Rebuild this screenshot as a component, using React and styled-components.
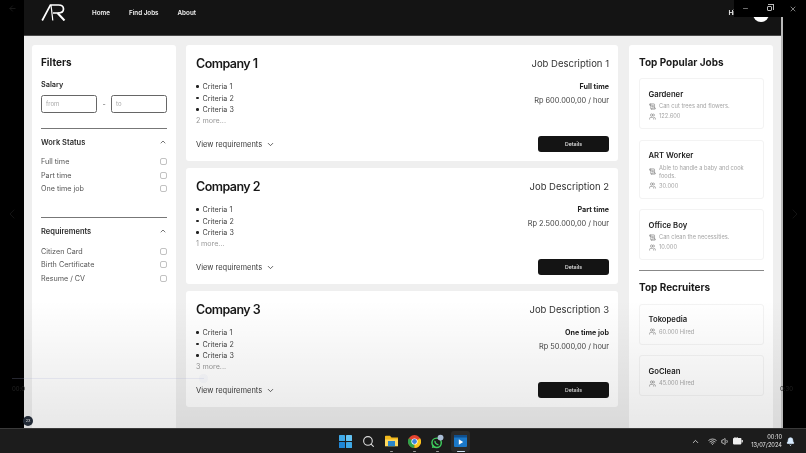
import styled, { createGlobalStyle } from "styled-components";
import {
  ChevronDown,
  ChevronUp,
  ChevronLeft,
  ChevronRight,
  ArrowLeft,
  Minus,
  X,
  Search,
  Users,
  ScrollText,
  Wifi,
  Volume1,
  Bell,
} from "lucide-react";

const GlobalStyle = createGlobalStyle`
  html, body {
    margin: 0;
    padding: 0;
    background: #000;
    overflow: hidden;
  }
  * {
    box-sizing: border-box;
  }
  body {
    font-family: Inter, "Liberation Sans", sans-serif;
  }
`;

// the reference is a soft video frame, so everything gets a touch of blur
const Screen = styled.div`
  position: relative;
  width: 806px;
  height: 453px;
  display: flex;
  flex-direction: column;
  overflow: hidden;
  background: #000;
  filter: blur(0.3px);
`;

const Stage = styled.div`
  height: 428px;
  display: grid;
  grid-template-columns: 24px 759px 23px;
`;

const Gutter = styled.div`
  display: flex;
  align-items: center;
  justify-content: center;
  color: #1d1d1d;
`;

const BackArrow = styled.div`
  position: absolute;
  left: 8px;
  top: 4px;
  color: #222;
  display: flex;
`;

const Browser = styled.div`
  position: relative;
  display: flex;
  flex-direction: column;
  height: 428px;
  overflow: hidden;
  background: #efefef;
  border-right: 2px solid #b9b9b9;
`;

const Nav = styled.nav`
  height: 36px;
  flex: none;
  display: flex;
  align-items: center;
  padding: 0 12px 10px 17px;
  background: #141414;
  border-bottom: 1px solid #4a4a4a;
`;

const Logo = styled.svg`
  width: 25px;
  height: 17px;
  margin-right: 26px;
`;

const NavLinks = styled.div`
  display: flex;
  gap: 19px;
  flex: 1;
  padding-top: 1px;
`;

const NavLink = styled.span`
  color: #f2f2f2;
  font-size: 6.3px;
  font-weight: 600;
`;

const Greeting = styled.span`
  color: #f2f2f2;
  font-size: 6.5px;
  font-weight: 600;
  padding-top: 1px;
  margin-right: 18px;
`;

const Avatar = styled.div`
  width: 16px;
  height: 16px;
  margin-top: 3px;
  border-radius: 50%;
  background: #fff;
`;

const Content = styled.main`
  flex: 1;
  display: grid;
  grid-template-columns: 144px 433px 144px;
  column-gap: 10px;
  padding: 9px 0 0 8px;
  min-height: 0;
`;

const Panel = styled.aside`
  background: #fff;
  border-radius: 3px 3px 0 0;
  padding: 11px 10px 0 ${(p) => p.$left}px;
`;

const PanelTitle = styled.h2`
  margin: 0;
  font-size: 10px;
  line-height: 13px;
  font-weight: 700;
  color: #1a1a1a;
`;

const Salary = styled.div`
  margin-top: 11px;
  font-size: 7.3px;
  line-height: 10px;
  font-weight: 600;
  color: #2b2b2b;
`;

const RangeRow = styled.div`
  display: flex;
  align-items: center;
  margin-top: 5px;
  height: 18px;
  width: 126px;
`;

const RangeInput = styled.div`
  width: 56px;
  height: 18px;
  border: 1px solid #666;
  border-radius: 2.5px;
  padding-left: 4px;
  font-size: 6px;
  line-height: 16px;
  color: #a9a9a9;
`;

const Dash = styled.span`
  flex: 1;
  text-align: center;
  font-size: 7px;
  color: #666;
`;

const FilterGroup = styled.section`
  margin-top: ${(p) => p.$gap}px;
  width: 126px;
  border-top: 1px solid #777;
  padding-top: 8px;
`;

const GroupHead = styled.div`
  display: flex;
  justify-content: space-between;
  align-items: center;
  height: 10px;
  font-size: 7.5px;
  font-weight: 600;
  color: #2d2d2d;
  margin-bottom: 8px;
`;

const CheckRow = styled.label`
  display: flex;
  justify-content: space-between;
  align-items: center;
  height: 13.6px;
  font-size: 7.2px;
  color: #555;
`;

const CheckBox = styled.span`
  width: 7px;
  height: 7px;
  border: 1px solid #c2c2c2;
  border-radius: 2px;
`;

const JobList = styled.div`
  display: flex;
  flex-direction: column;
  gap: 7px;
  margin-right: 1px;
`;

const JobCard = styled.article`
  height: 116px;
  background: #fff;
  border-radius: 3px;
  padding: 10px 9px 9px 10px;
  display: flex;
  flex-direction: column;
`;

const JobTop = styled.div`
  display: flex;
  justify-content: space-between;
  align-items: center;
  height: 16px;
`;

const Company = styled.h3`
  margin: 0;
  font-size: 12.5px;
  letter-spacing: -0.55px;
  font-weight: 600;
  color: #181818;
`;

const JobDesc = styled.span`
  font-size: 9.5px;
  color: #333;
`;

const JobBody = styled.div`
  display: flex;
  justify-content: space-between;
  margin-top: 10px;
  flex: 1;
`;

const Criteria = styled.ul`
  margin: 0;
  padding: 0;
  list-style: none;
`;

const Criterion = styled.li`
  display: flex;
  align-items: center;
  gap: 4px;
  height: 11.4px;
  font-size: 7.2px;
  color: #444;
  &::before {
    content: "";
    width: 2.5px;
    height: 2.5px;
    border-radius: 50%;
    background: #222;
  }
`;

const More = styled.div`
  height: 11.4px;
  font-size: 7.2px;
  line-height: 11.4px;
  color: #999;
`;

const Terms = styled.div`
  text-align: right;
`;

const WorkType = styled.div`
  font-size: 7.2px;
  line-height: 11px;
  font-weight: 700;
  color: #222;
`;

const Pay = styled.div`
  margin-top: 3px;
  font-size: 7.4px;
  line-height: 11px;
  color: #444;
`;

const JobFoot = styled.div`
  display: flex;
  justify-content: space-between;
  align-items: center;
  height: 16px;
`;

const ViewLink = styled.span`
  display: flex;
  align-items: center;
  gap: 4px;
  font-size: 7.5px;
  color: #3a3a3a;
`;

const DetailsButton = styled.button`
  width: 71px;
  height: 16px;
  border: 0;
  border-radius: 3px;
  padding: 0;
  background: #141414;
  color: #ddd;
  font-family: inherit;
  font-size: 5.2px;
  font-weight: 600;
`;

const ItemList = styled.div`
  display: flex;
  flex-direction: column;
  gap: 10.5px;
  margin-top: ${(p) => p.$top}px;
`;

const ItemCard = styled.div`
  width: 125px;
  border: 1px solid #f3f3f3;
  border-radius: 3px;
  padding: 9.5px 8px 7px 8.5px;
`;

const ItemName = styled.div`
  font-size: 7.7px;
  line-height: 11px;
  margin-bottom: 1.5px;
  font-weight: 600;
  color: #222;
`;

const ItemMeta = styled.div`
  display: flex;
  align-items: center;
  gap: 3.5px;
  font-size: 5.7px;
  line-height: 8px;
  padding: 1px 0;
  color: #a5a5a5;
  svg {
    flex: none;
    color: #777;
  }
`;

const PanelRule = styled.hr`
  width: 125px;
  margin: 10px 0 9.5px;
  border: 0;
  border-top: 1px solid #888;
`;

const Fade = styled.div`
  position: absolute;
  inset: 300px 0 0 0;
  background: linear-gradient(to bottom, rgba(0, 0, 0, 0), rgba(0, 0, 0, 0.09));
  pointer-events: none;
`;

const Timeline = styled.div`
  position: absolute;
  left: 12px;
  width: 192px;
  top: 378px;
  height: 1px;
  background: rgba(170, 175, 215, 0.22);
  &::after {
    content: "";
    position: absolute;
    right: -4px;
    top: -4px;
    width: 9px;
    height: 9px;
    border-radius: 50%;
    background: rgba(170, 175, 215, 0.08);
  }
`;

const TimeLabel = styled.span`
  position: absolute;
  top: 385px;
  font-size: 6px;
  color: #222;
  ${(p) => (p.$right ? "right: 13px;" : "left: 12px;")}
`;

const SpeedBadge = styled.div`
  position: absolute;
  left: 23px;
  top: 416px;
  width: 10px;
  height: 10px;
  border-radius: 50%;
  background: #222a36;
  color: #ddd;
  font-size: 4px;
  line-height: 10px;
  text-align: center;
`;

const WindowControls = styled.div`
  position: absolute;
  top: 0;
  right: 0;
  width: 72px;
  height: 17px;
  background: #000;
  display: grid;
  grid-template-columns: repeat(3, 23.5px);
  justify-items: center;
  align-items: center;
  color: #bbb;
`;

const RestoreIcon = styled.span`
  position: relative;
  width: 5px;
  height: 5px;
  border: 1px solid #bbb;
  border-radius: 1px;
  &::after {
    content: "";
    position: absolute;
    top: -3px;
    right: -3px;
    width: 5px;
    height: 5px;
    border-top: 1px solid #bbb;
    border-right: 1px solid #bbb;
  }
`;

const Taskbar = styled.footer`
  height: 25px;
  flex: none;
  display: grid;
  grid-template-columns: 1fr auto 1fr;
  align-items: center;
  background: #1c1c1c;
  border-top: 1px solid #3a3a3a;
`;

const TaskIcons = styled.div`
  grid-column: 2;
  display: flex;
  align-items: center;
  gap: 10px;
`;

const TaskSlot = styled.div`
  position: relative;
  width: 13px;
  height: 24px;
  display: flex;
  align-items: center;
  justify-content: center;
  &::after {
    content: "";
    display: ${(p) => (p.$open ? "block" : "none")};
    position: absolute;
    bottom: 1px;
    left: 50%;
    margin-left: -${(p) => (p.$active ? 4 : 1.5)}px;
    width: ${(p) => (p.$active ? 8 : 3)}px;
    height: 1.5px;
    border-radius: 1px;
    background: ${(p) => (p.$active ? "#cfe3f5" : "#9a9a9a")};
  }
`;

const ActiveTile = styled.div`
  width: 19px;
  height: 21px;
  flex: none;
  display: flex;
  align-items: center;
  justify-content: center;
  border-radius: 3px;
  background: #2b2b2b;
`;

const Tray = styled.div`
  grid-column: 3;
  display: flex;
  align-items: center;
  justify-content: flex-end;
  padding-right: 11px;
  color: #eee;
`;

const TrayChevron = styled(ChevronUp)`
  margin-right: 8px;
`;

const TrayIcons = styled.div`
  display: flex;
  align-items: center;
  gap: 3.5px;
  margin-right: 8px;
`;

const Clock = styled.div`
  font-size: 5.7px;
  line-height: 8px;
  text-align: right;
  color: #e4e4e4;
  margin-right: 4px;
`;

const jobs = [
  { company: "Company 1", desc: "Job Description 1", type: "Full time", pay: "Rp 600.000,00 / hour", more: "2 more..." },
  { company: "Company 2", desc: "Job Description 2", type: "Part time", pay: "Rp 2.500.000,00 / hour", more: "1 more..." },
  { company: "Company 3", desc: "Job Description 3", type: "One time job", pay: "Rp 50.000,00 / hour", more: "3 more..." },
];

const popular = [
  { name: "Gardener", desc: "Can cut trees and flowers.", count: "122.600" },
  { name: "ART Worker", desc: "Able to handle a baby and cook foods.", count: "30.000" },
  { name: "Office Boy", desc: "Can clean the necessities.", count: "10.000" },
];

const recruiters = [
  { name: "Tokopedia", count: "60.000 Hired" },
  { name: "GoClean", count: "45.000 Hired" },
];

const filterGroups = [
  { title: "Work Status", gap: 15, items: ["Full time", "Part time", "One time job"] },
  { title: "Requirements", gap: 21.6, items: ["Citizen Card", "Birth Certificate", "Resume / CV"] },
];

function ArLogo() {
  return (
    <Logo viewBox="0 0 25 17" fill="none" stroke="#fff">
      <path d="M1.2 16.5 L9.4 1 H17.5 Q22.5 1 22.5 5 Q22.5 9 17 9 H12" strokeWidth="1.7" />
      <path d="M10 1 L11.8 16.5" strokeWidth="1.2" />
      <path d="M16.5 9 L23.5 16.5" strokeWidth="2" />
    </Logo>
  );
}

function WindowsIcon() {
  return (
    <svg width="13" height="13" viewBox="0 0 13 13" fill="#3fa9e8">
      <rect x="0" y="0" width="6" height="6" rx="0.6" />
      <rect x="7" y="0" width="6" height="6" rx="0.6" fill="#63c3f3" />
      <rect x="0" y="7" width="6" height="6" rx="0.6" fill="#1f86d6" />
      <rect x="7" y="7" width="6" height="6" rx="0.6" />
    </svg>
  );
}

function FolderIcon() {
  return (
    <svg width="13" height="12" viewBox="0 0 13 12">
      <path d="M0 1.5 Q0 .8 .8 .8 H5 L6.5 2.4 H13 V11 H0 Z" fill="#f2b91d" />
      <rect x="0" y="4.5" width="13" height="6.8" fill="#ffd95e" />
      <rect x="3" y="6" width="7" height="5.2" fill="#2a86c9" />
    </svg>
  );
}

function ChromeIcon() {
  return (
    <svg width="13" height="13" viewBox="0 0 26 26">
      <circle cx="13" cy="13" r="13" fill="#e5432f" />
      <path d="M13 13 L1.7 6.5 A13 13 0 0 0 13 26 Z" fill="#2fa24a" />
      <path d="M13 13 L13 26 A13 13 0 0 0 24.3 6.5 Z" fill="#f8c51c" />
      <circle cx="13" cy="13" r="6.2" fill="#fff" />
      <circle cx="13" cy="13" r="4.8" fill="#3b82e0" />
    </svg>
  );
}

function WhatsAppIcon() {
  return (
    <svg width="15" height="17" viewBox="0 0 15 17">
      <circle cx="6.5" cy="10" r="5.4" fill="none" stroke="#3ecb5c" strokeWidth="1.7" />
      <path d="M1 16 L2 11.5 L5 15 Z" fill="#3ecb5c" />
      <path d="M4.6 7.8 Q4.4 11.5 8.6 12.2" fill="none" stroke="#3ecb5c" strokeWidth="1.6" />
      <circle cx="11" cy="4" r="3.4" fill="#a9bdd6" />
    </svg>
  );
}

function PlayerIcon() {
  return (
    <svg width="13" height="12" viewBox="0 0 13 12">
      <rect x="0" y="1" width="13" height="11" rx="1" fill="#1b78c8" />
      <rect x="0" y="0" width="13" height="2.5" fill="#0f4f8e" />
      <path d="M4.8 4.2 L9.2 7 L4.8 9.8 Z" fill="#fff" />
    </svg>
  );
}

function BatteryPlug() {
  return (
    <svg width="10" height="8" viewBox="0 0 10 8" fill="#eee">
      <rect x="0" y="1" width="8.4" height="6.4" rx="0.8" />
      <rect x="8.6" y="3" width="1.2" height="2.4" />
      <rect x="1.5" y="0" width="1" height="2" />
      <rect x="3.6" y="0" width="1" height="2" />
    </svg>
  );
}

function FilterPanel() {
  return (
    <Panel $left={9}>
      <PanelTitle>Filters</PanelTitle>
      <Salary>Salary</Salary>
      <RangeRow>
        <RangeInput>from</RangeInput>
        <Dash>-</Dash>
        <RangeInput>to</RangeInput>
      </RangeRow>
      {filterGroups.map((group) => (
        <FilterGroup key={group.title} $gap={group.gap}>
          <GroupHead>
            {group.title}
            <ChevronUp size={8} strokeWidth={2} color="#333" />
          </GroupHead>
          {group.items.map((item) => (
            <CheckRow key={item}>
              {item}
              <CheckBox />
            </CheckRow>
          ))}
        </FilterGroup>
      ))}
    </Panel>
  );
}

function Job({ job }) {
  return (
    <JobCard>
      <JobTop>
        <Company>{job.company}</Company>
        <JobDesc>{job.desc}</JobDesc>
      </JobTop>
      <JobBody>
        <div>
          <Criteria>
            <Criterion>Criteria 1</Criterion>
            <Criterion>Criteria 2</Criterion>
            <Criterion>Criteria 3</Criterion>
          </Criteria>
          <More>{job.more}</More>
        </div>
        <Terms>
          <WorkType>{job.type}</WorkType>
          <Pay>{job.pay}</Pay>
        </Terms>
      </JobBody>
      <JobFoot>
        <ViewLink>
          View requirements
          <ChevronDown size={9} strokeWidth={2} color="#333" />
        </ViewLink>
        <DetailsButton>Details</DetailsButton>
      </JobFoot>
    </JobCard>
  );
}

function SidePanel() {
  return (
    <Panel $left={10}>
      <PanelTitle>Top Popular Jobs</PanelTitle>
      <ItemList $top={9}>
        {popular.map((item) => (
          <ItemCard key={item.name}>
            <ItemName>{item.name}</ItemName>
            <ItemMeta>
              <ScrollText size={7} />
              <span>{item.desc}</span>
            </ItemMeta>
            <ItemMeta>
              <Users size={7} />
              {item.count}
            </ItemMeta>
          </ItemCard>
        ))}
      </ItemList>
      <PanelRule />
      <PanelTitle>Top Recruiters</PanelTitle>
      <ItemList $top={10}>
        {recruiters.map((item) => (
          <ItemCard key={item.name}>
            <ItemName>{item.name}</ItemName>
            <ItemMeta>
              <Users size={7} />
              {item.count}
            </ItemMeta>
          </ItemCard>
        ))}
      </ItemList>
    </Panel>
  );
}

export default function App() {
  return (
    <Screen>
      <GlobalStyle />
      <Stage>
        <Gutter>
          <ChevronLeft size={16} strokeWidth={1} />
        </Gutter>
        <Browser>
          <Nav>
            <ArLogo />
            <NavLinks>
              <NavLink>Home</NavLink>
              <NavLink>Find Jobs</NavLink>
              <NavLink>About</NavLink>
            </NavLinks>
            <Greeting>Hi</Greeting>
            <Avatar />
          </Nav>
          <Content>
            <FilterPanel />
            <JobList>
              {jobs.map((job) => (
                <Job key={job.company} job={job} />
              ))}
            </JobList>
            <SidePanel />
          </Content>
          <Fade />
        </Browser>
        <Gutter>
          <ChevronRight size={16} strokeWidth={1} />
        </Gutter>
      </Stage>
      <Taskbar>
        <TaskIcons>
          <TaskSlot><WindowsIcon /></TaskSlot>
          <TaskSlot><Search size={13} color="#ddd" /></TaskSlot>
          <TaskSlot $open><FolderIcon /></TaskSlot>
          <TaskSlot $open><ChromeIcon /></TaskSlot>
          <TaskSlot $open><WhatsAppIcon /></TaskSlot>
          <TaskSlot $open $active>
            <ActiveTile><PlayerIcon /></ActiveTile>
          </TaskSlot>
        </TaskIcons>
        <Tray>
          <TrayChevron size={9} />
          <TrayIcons>
            <Wifi size={9} />
            <Volume1 size={9} />
            <BatteryPlug />
          </TrayIcons>
          <Clock>
            00:10
            <br />
            13/07/2024
          </Clock>
          <Bell size={9} fill="#d8ecff" color="#d8ecff" />
        </Tray>
      </Taskbar>
      <BackArrow>
        <ArrowLeft size={9} />
      </BackArrow>
      <Timeline />
      <TimeLabel>00:0</TimeLabel>
      <TimeLabel $right>0:30</TimeLabel>
      <SpeedBadge>2x</SpeedBadge>
      <WindowControls>
        <Minus size={7} />
        <RestoreIcon />
        <X size={8} />
      </WindowControls>
    </Screen>
  );
}
